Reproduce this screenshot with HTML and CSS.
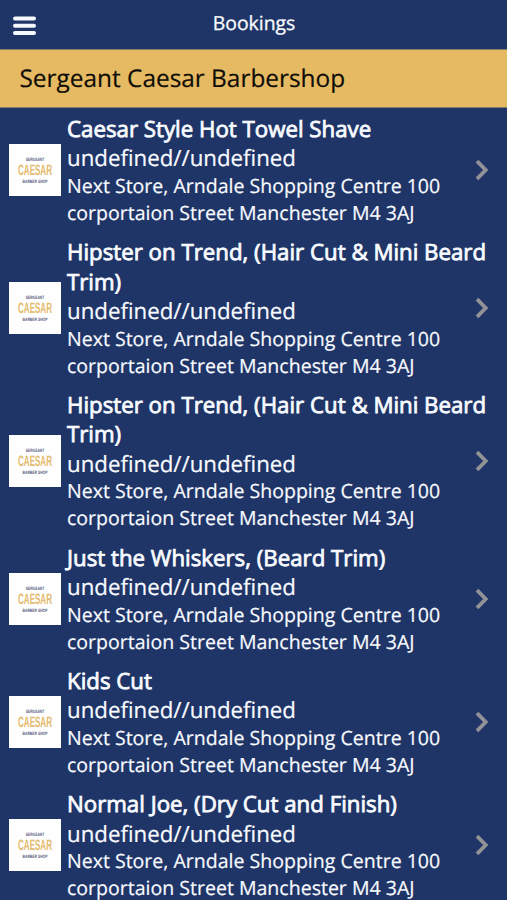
FILE: index.html
```html
<!DOCTYPE html>
<html lang="en">
<head>
<meta charset="utf-8">
<title>Bookings</title>
<link rel="stylesheet" href="styles.css">
</head>
<body>
<svg width="0" height="0" class="defs" aria-hidden="true">
  <symbol id="logo" viewBox="0 0 52 52">
    <text class="logo-small" transform="translate(26 17) scale(.69 1)">SERGEANT</text>
    <text class="logo-big" transform="translate(26 31.3) scale(.537 1)">CAESAR</text>
    <text class="logo-small" transform="translate(26 38.5) scale(.7 1)">BARBER SHOP</text>
  </symbol>
  <symbol id="chevron" viewBox="0 0 14 22"><path d="M2 2.2 10.7 11 2 19.8" fill="none" stroke="#929297" stroke-width="3.8"/></symbol>
</svg>
<header class="bar">
  <svg class="menu" viewBox="0 0 23 20"><path d="M2 2.5h19M2 9.8h19M2 17.1h19" stroke="#f5f9ff" stroke-width="4" stroke-linecap="round"/></svg>
  <h1 class="bar-title">Bookings</h1>
</header>
<h2 class="shop">Sergeant Caesar Barbershop</h2>
<ul class="list">
  <li class="item"><svg class="thumb"><use href="#logo"/></svg><div class="info"><h3 class="name">Caesar Style Hot Towel Shave</h3><p class="when">undefined//undefined</p><p class="address">Next Store, Arndale Shopping Centre 100<br>corportaion Street Manchester M4 3AJ</p></div><svg class="arrow"><use href="#chevron"/></svg></li>
  <li class="item"><svg class="thumb"><use href="#logo"/></svg><div class="info"><h3 class="name">Hipster on Trend, (Hair Cut &amp; Mini Beard<br>Trim)</h3><p class="when">undefined//undefined</p><p class="address">Next Store, Arndale Shopping Centre 100<br>corportaion Street Manchester M4 3AJ</p></div><svg class="arrow"><use href="#chevron"/></svg></li>
  <li class="item"><svg class="thumb"><use href="#logo"/></svg><div class="info"><h3 class="name">Hipster on Trend, (Hair Cut &amp; Mini Beard<br>Trim)</h3><p class="when">undefined//undefined</p><p class="address">Next Store, Arndale Shopping Centre 100<br>corportaion Street Manchester M4 3AJ</p></div><svg class="arrow"><use href="#chevron"/></svg></li>
  <li class="item"><svg class="thumb"><use href="#logo"/></svg><div class="info"><h3 class="name">Just the Whiskers, (Beard Trim)</h3><p class="when">undefined//undefined</p><p class="address">Next Store, Arndale Shopping Centre 100<br>corportaion Street Manchester M4 3AJ</p></div><svg class="arrow"><use href="#chevron"/></svg></li>
  <li class="item"><svg class="thumb"><use href="#logo"/></svg><div class="info"><h3 class="name">Kids Cut</h3><p class="when">undefined//undefined</p><p class="address">Next Store, Arndale Shopping Centre 100<br>corportaion Street Manchester M4 3AJ</p></div><svg class="arrow"><use href="#chevron"/></svg></li>
  <li class="item"><svg class="thumb"><use href="#logo"/></svg><div class="info"><h3 class="name">Normal Joe, (Dry Cut and Finish)</h3><p class="when">undefined//undefined</p><p class="address">Next Store, Arndale Shopping Centre 100<br>corportaion Street Manchester M4 3AJ</p></div><svg class="arrow"><use href="#chevron"/></svg></li>
</ul>
</body>
</html>
```
FILE: styles.css
```css
* { box-sizing: border-box; margin: 0; padding: 0; }
html, body { height: 900px; overflow: hidden; }
body { background: #203567; color: #f8fbff; font-family: "Open Sans", sans-serif; text-rendering: geometricPrecision; }
.defs { display: block; }
.bar { display: grid; grid-template-columns: 50px 1fr 50px; height: 49px; }
.menu { width: 23px; height: 20px; margin: 16px 0 0 13px; }
.bar-title { font-size: 19.4px; font-weight: 400; line-height: 28px; padding: 9px 0 0 1px; text-align: center; -webkit-text-stroke: .3px; }
.shop { height: 59px; padding: 0 19.5px; background: #e6ba62; border-top: 1px solid #827c69; border-bottom: 1px solid #827c69; color: #0e0d08; font-size: 24.4px; font-weight: 400; line-height: 58.5px; -webkit-text-stroke: .2px; }
.list { list-style: none; }
.item { display: grid; grid-template-columns: 52px 1fr 14px; align-items: center; column-gap: 6px; padding: 6px 18px 5.5px 9px; white-space: nowrap; }
.thumb { width: 52px; height: 52px; background: #fefefe; }
.info { min-width: 0; }
.name { font-size: 22.28px; line-height: 29.4px; font-weight: 400; -webkit-text-stroke: .8px; }
.when { font-size: 22.28px; line-height: 29.4px; margin-bottom: -1px; -webkit-text-stroke: .2px; }
.address { font-size: 19.55px; line-height: 27px; -webkit-text-stroke: .2px; }
.arrow { width: 14px; height: 22px; }
.logo-small { font: 700 4.8px "Liberation Sans", sans-serif; fill: #56597e; text-anchor: middle; }
.logo-big { font: 700 15px "Liberation Sans", sans-serif; fill: #e4ba6c; text-anchor: middle; }
```
